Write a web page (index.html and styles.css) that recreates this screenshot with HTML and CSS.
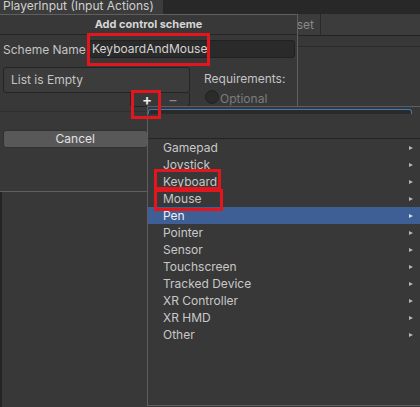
FILE: index.html
```html
<!DOCTYPE html>
<html>
<head>
<meta charset="utf-8">
<link rel="stylesheet" href="styles.css">
</head>
<body>
<div class="screen">
  <div class="tabbar"><div class="tab">PlayerInput (Input Actions)</div></div>
  <div class="toolbar"><div class="tb-btn">Save Asset</div></div>
  <div class="subbar"></div>
  <div class="content"></div>

  <div class="dialog">
    <div class="dlg-head">Add control scheme</div>
    <div class="dlg-row">
      <span class="lbl">Scheme Name</span>
      <div class="field">KeyboardAndMouse</div>
    </div>
    <div class="dlg-body">
      <div class="listcol">
        <div class="list">List is Empty</div>
        <div class="footer"><span class="plus">+</span><span class="minus">&minus;</span></div>
      </div>
      <div class="reqcol">
        <div class="req">Requirements:</div>
        <div class="opt"><span class="radio"></span><span class="opt-text">Optional</span></div>
      </div>
    </div>
    <div class="dlg-sep"></div>
    <div class="buttons"><div class="btn">Cancel</div><div class="btn"></div></div>
  </div>

  <div class="menu">
    <div class="menu-head"><div class="search"></div></div>
    <ul class="items">
      <li><span>Gamepad</span><i class="arrow"></i></li>
      <li><span>Joystick</span><i class="arrow"></i></li>
      <li><span>Keyboard</span><i class="arrow"></i></li>
      <li><span>Mouse</span><i class="arrow"></i></li>
      <li class="sel"><span>Pen</span><i class="arrow"></i></li>
      <li><span>Pointer</span><i class="arrow"></i></li>
      <li><span>Sensor</span><i class="arrow"></i></li>
      <li><span>Touchscreen</span><i class="arrow"></i></li>
      <li><span>Tracked Device</span><i class="arrow"></i></li>
      <li><span>XR Controller</span><i class="arrow"></i></li>
      <li><span>XR HMD</span><i class="arrow"></i></li>
      <li><span>Other</span><i class="arrow"></i></li>
    </ul>
  </div>

  <div class="mark mark-name"></div>
  <div class="mark mark-plus"></div>
  <div class="mark mark-kb"></div>
  <div class="mark mark-mouse"></div>
</div>
</body>
</html>
```
FILE: styles.css
```css
* { box-sizing: border-box; }
body {
  margin: 0;
  background: #383838;
  font-family: Inter, "Noto Sans", sans-serif;
  font-size: 12px;
  color: #c4c4c4;
}
.screen {
  position: relative;
  width: 420px;
  height: 407px;
  overflow: hidden;
}
.tabbar {
  height: 14px;
  background: #282828;
  display: flex;
}
.tab {
  width: 163px;
  background: #3c3c3c;
  padding-left: 3px;
  line-height: 12px;
  color: #d0d0d0;
  white-space: nowrap;
  overflow: hidden;
}
.toolbar {
  height: 22px;
  background: #3c3c3c;
  border-bottom: 1px solid #232323;
  display: flex;
}
.tb-btn {
  width: 321px;
  border-right: 1px solid #2a2a2a;
  text-align: right;
  padding-right: 6px;
  line-height: 21px;
  color: #8a8a8a;
}
.subbar {
  height: 11px;
  border-bottom: 1px solid #2a2a2a;
}
.content {
  height: 360px;
  border-left: 2px solid #242424;
}

/* dialog */
.dialog {
  position: absolute;
  left: -1px;
  top: 14px;
  width: 299px;
  height: 178px;
  border: 1px solid #606060;
  background: #383838;
}
.dlg-head {
  height: 20px;
  line-height: 19px;
  text-align: center;
  font-weight: 700;
  font-size: 11px;
  color: #d6d6d6;
  border-bottom: 1px solid #262626;
}
.dlg-row {
  display: flex;
  align-items: center;
  margin-top: 5px;
  padding: 0 2px 0 3px;
}
.lbl {
  width: 86px;
  flex: none;
  white-space: nowrap;
}
.field {
  flex: 1;
  height: 18px;
  border: 1px solid #212121;
  border-radius: 3px;
  background: #2a2a2a;
  color: #d4d4d4;
  padding-left: 2px;
  line-height: 16px;
}
.dlg-body {
  display: flex;
  gap: 14px;
  margin-top: 9px;
  padding-left: 3px;
}
.listcol {
  width: 187px;
  display: flex;
  flex-direction: column;
}
.list {
  height: 26px;
  border: 1px solid #242424;
  border-radius: 3px;
  background: #3c3c3c;
  padding-left: 7px;
  line-height: 24px;
}
.footer {
  align-self: flex-end;
  width: 60px;
  height: 14px;
  border: 1px solid #242424;
  border-top: none;
  border-radius: 0 0 3px 3px;
  display: flex;
  justify-content: flex-end;
  padding-right: 3px;
}
.footer span {
  width: 26px;
  text-align: center;
  line-height: 13px;
  font-size: 15px;
}
.plus { color: #eeeeee; font-weight: 600; }
.minus { color: #8a8a8a; }
.reqcol {
  padding-top: 3px;
}
.req {
  line-height: 17px;
}
.opt {
  display: flex;
  align-items: center;
  height: 16px;
  margin-top: 2px;
  padding-left: 1px;
}
.radio {
  width: 14px;
  height: 14px;
  border-radius: 50%;
  background: #2b2b2b;
  border: 1px solid #222222;
  flex: none;
}
.opt-text {
  color: #7c7c7c;
  margin-left: 1px;
  margin-top: 3px;
}
.dlg-sep {
  margin-top: 4px;
  border-top: 1px solid #2f2f2f;
}
.buttons {
  display: flex;
  gap: 3px;
  margin-top: 18px;
  padding: 0 2px 0 3px;
}
.btn {
  flex: 1;
  height: 18px;
  border: 1px solid #303030;
  border-radius: 3px;
  background: #585858;
  color: #e2e2e2;
  text-align: center;
  line-height: 16px;
}

/* popup menu */
.menu {
  position: absolute;
  left: 147px;
  top: 106px;
  width: 274px;
  height: 300px;
  border: 1px solid #5e5e5e;
  background: #383838;
}
.menu-head {
  height: 32px;
  padding-top: 2px;
  border-bottom: 1px solid #242424;
}
.search {
  width: 264px;
  height: 5px;
  border: 1px solid #3c7bbd;
  border-bottom: none;
  border-radius: 3px 3px 0 0;
  background: #2a2a2a;
}
.items {
  list-style: none;
  margin: 0;
  padding: 0;
}
.items li {
  height: 17px;
  line-height: 17px;
  padding: 0 7px 0 15px;
  display: flex;
  align-items: center;
  justify-content: space-between;
  color: #c8c8c8;
}
.items li.sel {
  background: #3e5f96;
  color: #f0f0f0;
}
.arrow {
  width: 0;
  height: 0;
  border-left: 4px solid #b8b8b8;
  border-top: 2.5px solid transparent;
  border-bottom: 2.5px solid transparent;
}
.sel .arrow { border-left-color: #dcdcdc; }

/* red annotation frames */
.mark {
  position: absolute;
  border: 3px solid #e3161d;
}
.mark-name { left: 87px; top: 33px; width: 123px; height: 33px; }
.mark-plus { left: 131px; top: 90px; width: 30px; height: 29px; }
.mark-kb { left: 154px; top: 169px; width: 67px; height: 21px; }
.mark-mouse { left: 154px; top: 189px; width: 69px; height: 22px; }
```
